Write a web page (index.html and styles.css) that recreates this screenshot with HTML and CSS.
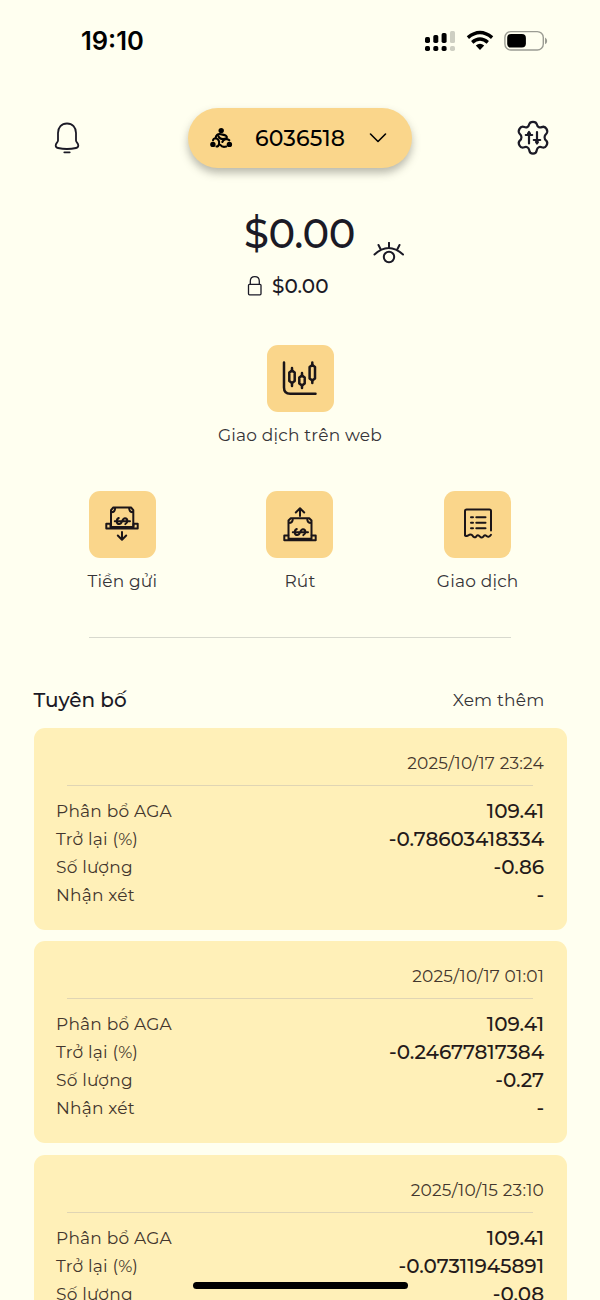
FILE: index.html
```html
<!DOCTYPE html>
<html lang="vi">
<head>
<meta charset="utf-8">
<meta name="viewport" content="width=600">
<title>6036518</title>
<link rel="stylesheet" href="styles.css">
</head>
<body>
<main class="app">
  <header class="status">
    <span class="time">19:10</span>
    <div class="indicators">
      <svg class="signal" width="32" height="22" viewBox="0 0 32 22"><g><rect x="1" y="7" width="5" height="6" rx="1.7"/><rect x="9.300" y="5" width="5" height="8" rx="1.7"/><rect x="17.600" y="3" width="5" height="10" rx="1.700"/><rect x="1" y="16" width="5" height="5" rx="1.700"/><rect x="9.300" y="16" width="5" height="5" rx="1.700"/><rect x="17.600" y="16" width="5" height="5" rx="1.700"/></g><g fill="#cecfc2"><rect x="26" y="1" width="5" height="12" rx="1.500"/><rect x="26" y="16" width="5" height="5" rx="1.700"/></g></svg>
      <svg class="wifi" width="28" height="22" viewBox="0 0 28 22"><path d="M1.900 7.600Q14-2.500 26.100 7.600M6.200 12.300Q14 5.700 21.800 12.300" fill="none" stroke="#000" stroke-width="3.500"/><path d="M9.800 15.400Q14 12 18.200 15.400L14 19.900Z"/></svg>
      <svg class="battery" width="44" height="22" viewBox="0 0 44 22"><rect x=".9" y="1.600" width="38.400" height="18.400" rx="6" fill="none" stroke="#9b9c93" stroke-width="1.400"/><rect x="3.200" y="4" width="18.700" height="13.600" rx="4"/><path d="M41 7.500Q43.200 8.500 43.200 11T41 14.300Z" fill="#9b9c93"/></svg>
    </div>
  </header>

  <nav class="topbar">
    <svg class="bell" width="28" height="32" viewBox="0 0 28 32"><path d="M5 18.500V11C5 5.500 8.500 1.500 14 1.500S23 5.500 23 11v7.500c0 2 2.300 2.500 2.300 5 0 1.400-.8 2.200-2.300 2.500-5.500 1.200-12.500 1.200-18 0-1.500-.3-2.300-1.100-2.300-2.500 0-2.500 2.300-3 2.300-5Z"/><path d="M11.300 30.300h5.400"/></svg>
    <button class="account">
      <svg class="people" width="24" height="24" viewBox="0 0 24 24"><circle cx="12.200" cy="4.600" r="2.700"/><circle cx="3.900" cy="18.400" r="2.700"/><circle cx="20.400" cy="18.400" r="2.700"/><path class="body" d="M6.800 12.500C6.300 9 9 7.600 12 8.300S18.500 9 17.800 12.300M4 14.300C4.500 12 7 11.500 9 13.500S10.500 20.500 7.500 20.500M20.300 14.300C18.500 12.300 14.500 13 13.300 16M11.500 19C13 21.500 15.500 21 17.300 20.500M9.500 10.500C11 13 14 13.800 17.500 12.300"/></svg>
      <span>6036518</span>
      <svg class="chevron" width="18" height="12" viewBox="0 0 18 12"><path d="m1.500 2 7.500 7.500L16.500 2"/></svg>
    </button>
    <svg class="gear" width="36" height="36" viewBox="0 0 36 36"><path d="M14.200 4.300c.4-1.900 1.800-2.500 3.800-2.500s3.400.6 3.800 2.500c.6 2.700 2.500 3.700 4.900 2.800 2.300-.9 3.700-.2 4.800 1.800 1.200 2.200 1.300 3.500-.3 4.900-2.200 1.800-2.200 5 0 6.800 1.600 1.400 1.500 2.700.3 4.900-1.100 2-2.500 2.700-4.800 1.800-2.400-.9-4.300.1-4.900 2.800-.4 2.500-1.800 3.600-3.800 3.600s-3.400-1.100-3.800-3.600c-.6-2.700-2.500-3.700-4.900-2.800-2.300.9-3.700.2-4.800-1.800-1.200-2.200-1.300-3.500.3-4.900 2.200-1.800 2.200-5 0-6.800-1.600-1.400-1.500-2.700-.3-4.900 1.100-2 2.500-2.700 4.800-1.800 2.400.9 4.300-.1 4.900-2.800Z"/><path d="M14 23.500V12.500M10.800 15h6.400M22 12v11.500M18.800 20h6.400M14 12l-1 1.500h2ZM22 23.500l-1-1.500h2Z"/></svg>
  </nav>

  <section class="balance">
    <div class="total"><span class="amount">$0.00</span>
      <svg class="eye" width="32" height="22" viewBox="0 0 32 22"><path d="M1.500 12.500Q15.500-.4 30 12.500M5.500 3l2 4M16 .8v5.200M26.500 3l-2 4"/><circle cx="16" cy="15" r="5.200"/></svg>
    </div>
    <div class="locked">
      <svg class="lock" width="16" height="22" viewBox="0 0 16 22"><rect x="1.500" y="9.300" width="12.500" height="10.500" rx="1"/><path d="M3.300 9V6.300C3.300 3.500 5 1.700 7.800 1.700s4.500 1.800 4.500 4.600V9"/></svg>
      <span>$0.00</span>
    </div>
  </section>

  <section class="actions">
    <a class="action web">
      <span class="tile"><svg width="40" height="40" viewBox="0 0 40 40"><path class="thick" d="M4 4.500v25c0 4 2 6.200 6.200 6.200H35.500"/><path class="thick" d="M12 10v3M12 25v3M22 15v3M22 27v3M32.300 4.500v3M32.300 22v3"/><path class="thick" d="m12 12.500 2.700 2v8.500L12 25l-2.700-2v-8.500ZM22 17.500l2.700 2v6L22 27.500l-2.700-2v-6ZM32.300 7l2.700 2v11.500l-2.700 2-2.700-2V9Z"/></svg></span>
      <span class="label">Giao dịch trên web</span>
    </a>
    <a class="action deposit">
      <span class="tile"><svg width="40" height="40" viewBox="0 0 40 40"><path d="M9 22V6.200L11.300 3.500H29l2.300 2.700V22M9.300 8.200c2.500 0 3.800-1.500 3.800-4M31 8.200c-2.500 0-3.800-1.500-3.800-4"/><path d="M4.300 19.800h4.200v3.200h23v-3.200h4.200v4.800H4.300Z"/><path d="M12.800 17.300H28M16.800 14C13.800 15.500 14.200 20 17.300 20 20.800 20 19.500 14.200 23 14.200 26.200 14.400 26 19 23.300 20.200"/><path d="M20 28v7.500M15.800 31.500l4.200 4.200 4.200-4.200"/></svg></span>
      <span class="label">Tiền gửi</span>
    </a>
    <a class="action withdraw">
      <span class="tile"><svg width="40" height="40" viewBox="0 0 40 40"><path d="M8.500 31V16.500l2.300-2.300h18.400l2.300 2.300V31M8.800 19c2.500 0 4-1.500 4-4.500M31.200 19c-2.500 0-4-1.500-4-4.500"/><path d="M4.300 31.500h4.200v3.200h23v-3.200h4.200v4.800H4.300Z"/><path d="M12.800 28.300H28M16.800 25C13.800 26.500 14.200 31 17.300 31 20.800 31 19.500 25.200 23 25.200 26.200 25.400 26 30 23.300 31.200"/><path d="M20 12V4.300M15.800 8.500 20 4.300l4.200 4.200"/></svg></span>
      <span class="label">Rút</span>
    </a>
    <a class="action history">
      <span class="tile"><svg width="40" height="40" viewBox="0 0 40 40"><path d="M33 26.500V7c0-1-.5-1.500-1.500-1.500h-23C7.500 5.500 7 6 7 7v24.500q2 1 3.500-.3 1.900-1.500 3.800 0 1.600 3 3.700 1.600 1.800-3 3.700-.5 1.500 2.200 3.500.5 1.800-3 3.700-.5 2 1.500 4.100-1.500"/><path d="M13 13.300h2M13 18.800h2M13 24.300h2M18.300 13.300h9.200M18.300 18.800h9.200M18.300 24.300h9.200"/></svg></span>
      <span class="label">Giao dịch</span>
    </a>
  </section>

  <hr class="divider">

  <section class="statements">
    <div class="heading"><h2>Tuyên bố</h2><a class="more">Xem thêm</a></div>
    <article class="card">
      <time>2025/10/17 23:24</time>
      <dl>
        <div><dt>Phân bổ AGA</dt><dd>109.41</dd></div>
        <div><dt>Trở lại (%)</dt><dd>-0.78603418334</dd></div>
        <div><dt>Số lượng</dt><dd>-0.86</dd></div>
        <div><dt>Nhận xét</dt><dd>-</dd></div>
      </dl>
    </article>
    <article class="card">
      <time>2025/10/17 01:01</time>
      <dl>
        <div><dt>Phân bổ AGA</dt><dd>109.41</dd></div>
        <div><dt>Trở lại (%)</dt><dd>-0.24677817384</dd></div>
        <div><dt>Số lượng</dt><dd>-0.27</dd></div>
        <div><dt>Nhận xét</dt><dd>-</dd></div>
      </dl>
    </article>
    <article class="card">
      <time>2025/10/15 23:10</time>
      <dl>
        <div><dt>Phân bổ AGA</dt><dd>109.41</dd></div>
        <div><dt>Trở lại (%)</dt><dd>-0.07311945891</dd></div>
        <div><dt>Số lượng</dt><dd>-0.08</dd></div>
      </dl>
    </article>
  </section>
  <div class="home-indicator"></div>
</main>
</body>
</html>
```
FILE: styles.css
```css
* { box-sizing: border-box; }
body { margin: 0; background: #fffff0; }
.app {
  position: relative;
  width: 600px;
  height: 1300px;
  overflow: hidden;
  background: #fffff0;
  color: #1b1a26;
  font-family: Montserrat, Inter, sans-serif;
}
svg { display: block; flex: none; }

.status {
  height: 82px;
  padding: 0 52px 0 81px;
  display: flex;
  align-items: center;
  justify-content: space-between;
  color: #000;
}
.time { font: 600 25.5px/30px Inter, sans-serif; letter-spacing: 0; }
.indicators { display: flex; align-items: center; gap: 10px; margin-top: -1px; }

.topbar {
  margin-top: 26px;
  height: 60px;
  padding: 0 49px 0 53px;
  display: flex;
  align-items: center;
  justify-content: space-between;
}
.bell, .gear { fill: none; stroke: #1b1a26; stroke-width: 1.8; stroke-linecap: round; stroke-linejoin: round; }
.gear { stroke-width: 2.2; }
.account {
  width: 224px;
  height: 60px;
  margin-left: 4px;
  padding: 0 25px 0 21px;
  display: flex;
  align-items: center;
  border: 0;
  border-radius: 30px;
  background: #fad68b;
  box-shadow: 0 5px 8px rgba(80, 80, 70, .4);
  color: #000;
  font: 500 22px/30px Montserrat, Inter, sans-serif;
  letter-spacing: .1px;
}
.account span { width: 91px; margin: 2px 0 0 22px; white-space: nowrap; text-align: center; }
.people .body { fill: none; stroke: #000; stroke-width: 2.1; stroke-linecap: round; }
.chevron { margin-left: 24px; fill: none; stroke: #000; stroke-width: 1.6; stroke-linecap: round; stroke-linejoin: round; }

.balance { height: 176.5px; padding-top: 42px; display: flex; flex-direction: column; align-items: center; }
.total { width: 160px; margin-left: 50px; display: flex; align-items: flex-end; justify-content: space-between; }
.amount { font-size: 40px; line-height: 48px; font-weight: 500; letter-spacing: -.4px; margin-left: -1px; }
.eye { margin: 0 0 -6px 0; fill: none; stroke: #1b1a26; stroke-width: 2; stroke-linecap: round; }
.locked { width: 82px; margin: 16px 0 0 -24px; height: 24px; display: flex; align-items: center; gap: 9px; }
.locked span { font-size: 20px; line-height: 24px; font-weight: 500; white-space: nowrap; }
.lock { fill: none; stroke: #1b1a26; stroke-width: 1.3; }

.actions {
  width: 533px;
  margin: 0 auto;
  display: grid;
  grid-template-columns: repeat(3, 1fr);
  row-gap: 44.4px;
}
.action { display: flex; flex-direction: column; align-items: center; }
.web { grid-column: 1 / -1; }
.tile { width: 67px; height: 67px; display: grid; place-items: center; border-radius: 11px; background: #fad68b; }
.tile svg { fill: none; stroke: #1b1518; stroke-width: 2; stroke-linecap: round; stroke-linejoin: round; }
.tile .thick { stroke-width: 2.5; }
.label { margin-top: 12px; line-height: 23px; font-size: 17px; letter-spacing: .2px; white-space: nowrap; color: #363438; }

.divider { width: 422px; height: 1px; margin: 44.1px auto 0; border: 0; background: #d8d9ce; }

.statements { padding: 47.5px 33.5px 0; display: flex; flex-direction: column; gap: 11.5px; }
.heading { height: 30px; margin-bottom: 1px; padding-right: 22px; display: flex; align-items: center; justify-content: space-between; }
.heading h2 { margin: 0; font-size: 20px; font-weight: 500; letter-spacing: -.05px; }
.more { font-size: 17px; letter-spacing: .2px; color: #363438; }
.card { flex: none; height: 202px; padding: 20px 22.5px 0; border-radius: 11px; background: #fff0b8; color: #241a1a; }
.card time { display: block; height: 37px; line-height: 30px; text-align: right; font-size: 17px; letter-spacing: .2px; color: #43362d; }
.card dl { margin: 0; }
.card dl::before { content: ""; display: block; height: 1px; margin: 0 11px 11px; background: #e0d5b4; }
.card dl div { height: 28px; display: flex; align-items: center; justify-content: space-between; }
.card dt { font-size: 17px; letter-spacing: .2px; color: #43362d; }
.card dd { margin: 0; font-size: 20px; font-weight: 500; letter-spacing: -.05px; }

.home-indicator { position: absolute; left: 193px; top: 1282px; width: 215px; height: 7px; border-radius: 4px; background: #000; }
```
